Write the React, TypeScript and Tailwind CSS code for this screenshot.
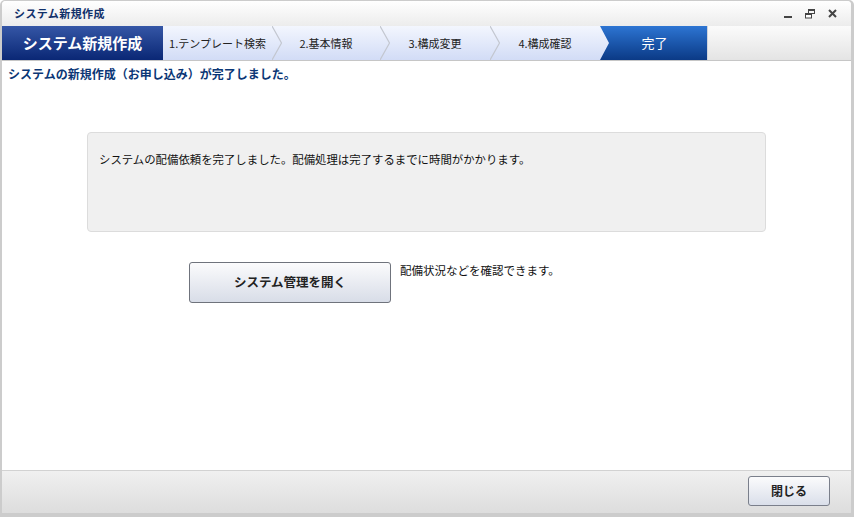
import React from "react";

const font = { fontFamily: '"Noto Sans CJK JP", "Noto Sans", sans-serif' };

const steps = [
  { label: "1.テンプレート検索", w: "w-[109px]" },
  { label: "2.基本情報", w: "w-[108px]" },
  { label: "3.構成変更", w: "w-[110px]" },
  { label: "4.構成確認", w: "w-[110px]" },
];

export default function App() {
  return (
    <div
      className="w-[854px] h-[517px] bg-[#cccccc] rounded-t-[5px] pt-[1px] pl-[2px] pr-[3px] pb-[4px] flex flex-col overflow-hidden"
      style={font}
    >
      <div className="flex-1 flex flex-col bg-white rounded-t-[4px] overflow-hidden">
        {/* title bar */}
        <div className="h-[25px] shrink-0 flex items-center justify-between bg-gradient-to-b from-white to-[#ececec] pl-[12px] pr-[14px]">
          <span className="text-[11px] font-bold text-[#10306a] tracking-[0.4px] leading-none">
            システム新規作成
          </span>
          <div className="flex items-center gap-[12px] text-[#3c3c3c]">
            <svg width="10" height="10" viewBox="0 0 10 10">
              <rect x="1" y="7" width="8" height="2" fill="#444" />
            </svg>
            <svg width="11" height="10" viewBox="0 0 11 10">
              <rect x="3.5" y="0.5" width="6" height="4" fill="none" stroke="#444" />
              <rect x="3.5" y="0.5" width="6" height="1.5" fill="#444" />
              <rect x="0.5" y="4.5" width="6" height="4.5" fill="white" stroke="#444" />
              <rect x="0.5" y="4.5" width="6" height="1.5" fill="#444" />
            </svg>
            <svg width="9" height="9" viewBox="0 0 9 9">
              <path d="M1 1 L8 8 M8 1 L1 8" stroke="#444" strokeWidth="2" />
            </svg>
          </div>
        </div>

        {/* step bar */}
        <div className="h-[35px] shrink-0 flex border-b border-[#c6c6c6]">
          <div className="w-[161px] flex items-center justify-center bg-gradient-to-b from-[#3556a6] to-[#0a2775] text-white font-bold text-[15px]">
            システム新規作成
          </div>
          {steps.map((s, i) => (
            <div
              key={s.label}
              className={`${s.w} relative flex items-center justify-center bg-gradient-to-b from-[#f3f6fe] to-[#d2dcf6] text-[11px] text-[#222]`}
            >
              <span className="relative z-20">{s.label}</span>
              {i < 3 && (
                <svg
                  className="absolute left-full top-0 z-10"
                  width="11"
                  height="34"
                  viewBox="0 0 11 34"
                >
                  <polyline
                    points="0,0 9.5,17 0,34"
                    fill="none"
                    stroke="#c3c7d0"
                    strokeWidth="1.2"
                  />
                </svg>
              )}
            </div>
          ))}
          <div className="w-[107px] bg-gradient-to-b from-[#f3f6fe] to-[#d2dcf6]">
            <div className="h-full flex items-center justify-center pl-[2px] bg-gradient-to-b from-[#2d75d3] to-[#0b3a86] text-white text-[13px] [clip-path:polygon(0_0,100%_0,100%_100%,0_100%,9px_50%)]">
              完了
            </div>
          </div>
          <div className="flex-1 bg-gradient-to-b from-[#fbfbfb] to-[#e4e4e4] border-l border-[#d0d4dc]" />
        </div>

        {/* content */}
        <div className="flex-1 flex flex-col">
          <div className="pl-[6px] pt-[5px] text-[12px] font-bold text-[#0b3776] leading-[16px]">
            システムの新規作成（お申し込み）が完了しました。
          </div>
          <div className="ml-[85px] mt-[50px] w-[679px] h-[100px] bg-[#f0f0f0] border border-[#dcdcdc] rounded-[4px] pl-[11px] pt-[18px] text-[11.4px] text-[#111] leading-[16px]">
            システムの配備依頼を完了しました。配備処理は完了するまでに時間がかかります。
          </div>
          <div className="flex items-start ml-[187px] mt-[30px] gap-[9px]">
            <button className="w-[202px] h-[41px] rounded-[3px] border border-[#6f737c] bg-gradient-to-b from-[#fbfbfc] to-[#d8dde8] text-[12.5px] font-bold text-[#222]">
              システム管理を開く
            </button>
            <span className="mt-[0px] text-[11.5px] text-[#111] leading-[16px]">
              配備状況などを確認できます。
            </span>
          </div>
        </div>

        {/* footer */}
        <div className="h-[43px] shrink-0 border-t border-[#d2d2d2] bg-gradient-to-b from-[#f0f0f0] to-[#dddddd] flex items-start justify-end pr-[21px] pt-[5px]">
          <button className="w-[82px] h-[30px] rounded-[3px] border border-[#7a7f8b] bg-gradient-to-b from-[#fbfbfc] to-[#dadfea] text-[12px] font-bold text-[#222]">
            閉じる
          </button>
        </div>
      </div>
    </div>
  );
}
